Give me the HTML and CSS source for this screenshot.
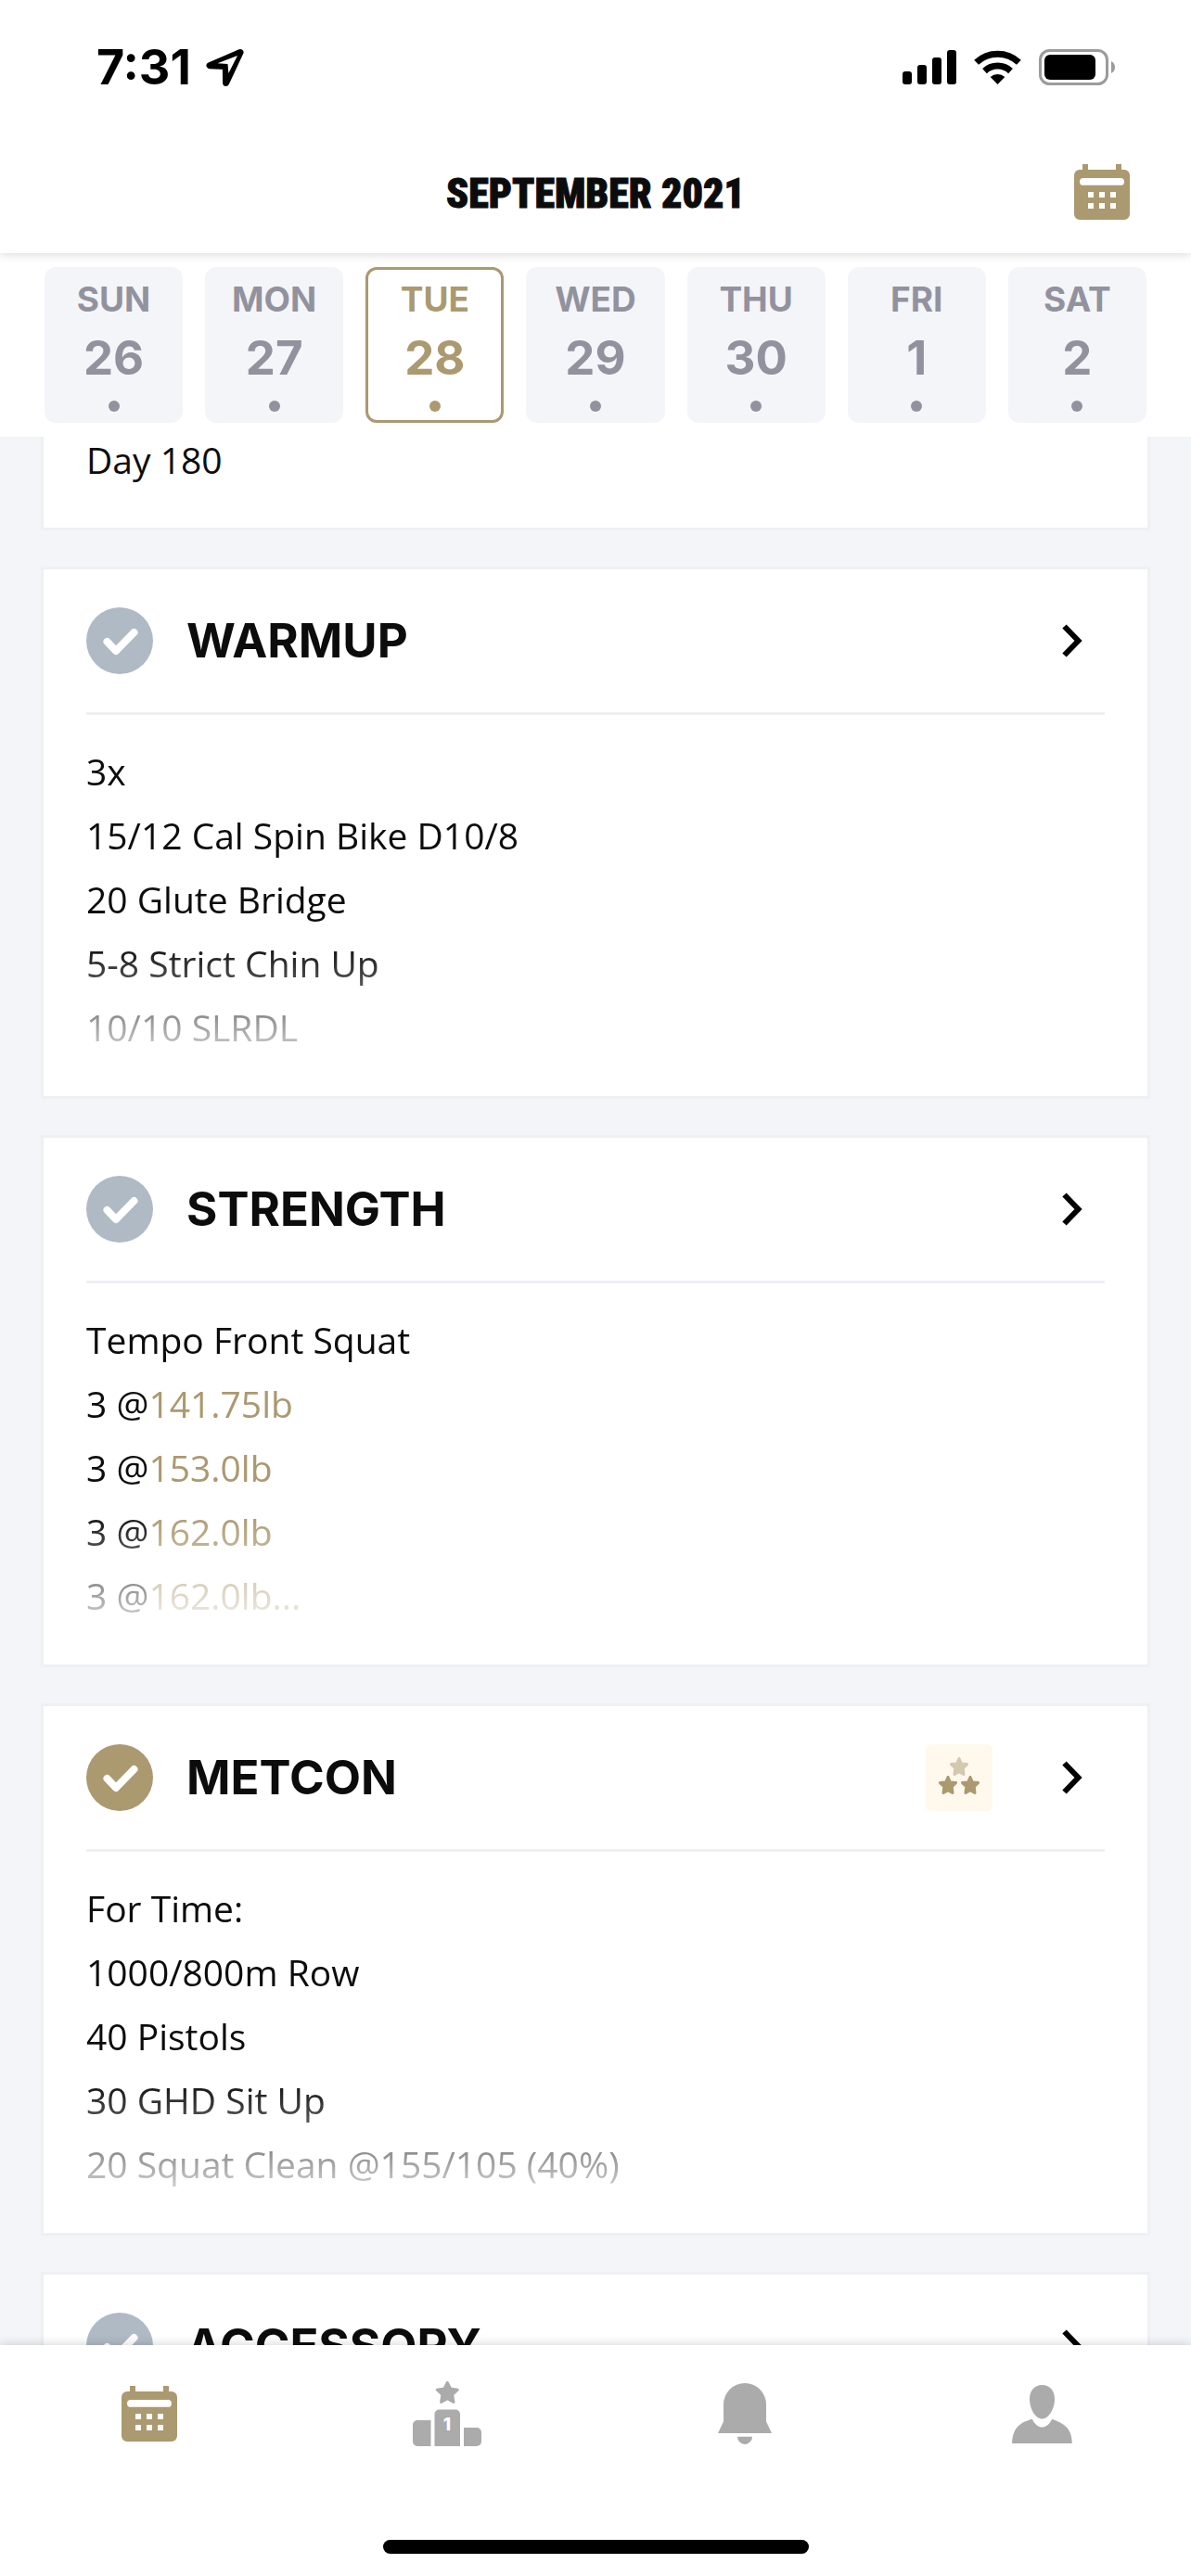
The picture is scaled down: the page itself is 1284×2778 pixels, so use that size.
FILE: index.html
```
<!DOCTYPE html>
<html lang="en">
<head>
<meta charset="utf-8">
<meta name="viewport" content="width=device-width, initial-scale=1">
<title>September 2021</title>
<link rel="stylesheet" href="styles.css">
</head>
<body>
<svg class="sprite" aria-hidden="true">
  <symbol id="calendar" viewBox="0 0 20 20">
    <path fill="currentColor" fill-rule="evenodd" d="M3 0h2v2h10V0h2v2h1a2 2 0 0 1 2 2v14a2 2 0 0 1-2 2H2a2 2 0 0 1-2-2V4a2 2 0 0 1 2-2h1zM3.300 5a1.300 1.300 0 0 0 0 2.600h13.400a1.300 1.300 0 0 0 0-2.600zM5 10v2h2v-2zM9 10v2h2v-2zM13 10v2h2v-2zM5 14v2h2v-2zM9 14v2h2v-2zM13 14v2h2v-2z"/>
  </symbol>
  <symbol id="check" viewBox="0 0 72 72">
    <circle cx="36" cy="36" r="36" fill="currentColor"/>
    <path d="M22.500 37 L32 47 L51.500 27" fill="none" stroke="#fff" stroke-width="8" stroke-linecap="round" stroke-linejoin="round"/>
  </symbol>
  <symbol id="chevron" viewBox="0 0 22 36">
    <path d="M2.500 2.500 L17.500 18 L2.500 33.500" fill="none" stroke="#000" stroke-width="6"/>
  </symbol>
  <symbol id="star" viewBox="0 0 20 20">
    <path fill="currentColor" stroke="currentColor" stroke-width="3" stroke-linejoin="round" d="M10 1.500 L12.300 6.900 L18.500 7.600 L14.200 11.800 L15 18.500 L10 15.700 L5 18.500 L5.800 11.800 L1.500 7.600 L7.700 6.900 Z"/>
  </symbol>
</svg>

<header class="top">
  <div class="status">
    <div class="status-left">
      <time>7:31</time>
      <svg class="location" viewBox="0 0 42 42" aria-hidden="true"><path d="M37 4.500 L4 18.700 L21.300 19.500 L21.600 37.500 Z" stroke="#000" stroke-width="7" stroke-linejoin="round"/><path d="M34 8 L12.500 16.300 L23.500 17 L24.400 27 Z" fill="#fff"/></svg>
    </div>
    <div class="status-right">
      <svg class="signal" viewBox="0 0 58 37" aria-hidden="true"><rect y="23" width="10" height="14" rx="3"/><rect x="16" y="16" width="10" height="21" rx="3"/><rect x="32" y="8" width="10" height="29" rx="3"/><rect x="48" width="10" height="37" rx="3"/></svg>
      <svg class="wifi" viewBox="0 0 51 37" aria-hidden="true"><path d="M25.500 37 L17.700 29 A11.500 11.500 0 0 1 33.300 29 Z"/><path d="M11.500 22.600 A20.500 20.500 0 0 1 39.500 22.600" fill="none" stroke="#000" stroke-width="7"/><path d="M2.600 13.200 A33.500 33.500 0 0 1 48.400 13.200" fill="none" stroke="#000" stroke-width="7"/></svg>
      <svg class="battery" viewBox="0 0 82 39" aria-hidden="true"><rect x="1.500" y="1.500" width="72" height="36" rx="10" fill="none" stroke="#9b9b9b" stroke-width="3"/><rect x="6" y="6" width="55" height="27" rx="6"/><path d="M78 13 Q82 15 82 19.500 Q82 24 78 26 Z" fill="#9b9b9b"/></svg>
    </div>
  </div>
  <div class="title-bar">
    <h1>SEPTEMBER 2021</h1>
    <button class="calendar-button" type="button" aria-label="Open calendar"><svg class="icon-calendar"><use href="#calendar"/></svg></button>
  </div>
</header>

<nav class="days" aria-label="Days">
  <button class="day" type="button"><span>SUN</span><strong>26</strong><i></i></button>
  <button class="day" type="button"><span>MON</span><strong>27</strong><i></i></button>
  <button class="day day-selected" type="button" aria-current="date"><span>TUE</span><strong>28</strong><i></i></button>
  <button class="day" type="button"><span>WED</span><strong>29</strong><i></i></button>
  <button class="day" type="button"><span>THU</span><strong>30</strong><i></i></button>
  <button class="day" type="button"><span>FRI</span><strong>1</strong><i></i></button>
  <button class="day" type="button"><span>SAT</span><strong>2</strong><i></i></button>
</nav>

<main class="feed">
  <section class="card card-intro"><p>Day 180</p></section>

  <section class="card">
    <a class="card-head" href="#warmup">
      <svg class="check"><use href="#check"/></svg>
      <h2>WARMUP</h2>
      <svg class="chevron"><use href="#chevron"/></svg>
    </a>
    <div class="lines">
      <p>3x</p>
      <p>15/12 Cal Spin Bike D10/8</p>
      <p>20 Glute Bridge</p>
      <p>5-8 Strict Chin Up</p>
      <p>10/10 SLRDL</p>
    </div>
  </section>

  <section class="card">
    <a class="card-head" href="#strength">
      <svg class="check"><use href="#check"/></svg>
      <h2>STRENGTH</h2>
      <svg class="chevron"><use href="#chevron"/></svg>
    </a>
    <div class="lines">
      <p>Tempo Front Squat</p>
      <p>3 @<span class="load">141.75lb</span></p>
      <p>3 @<span class="load">153.0lb</span></p>
      <p>3 @<span class="load">162.0lb</span></p>
      <p>3 @<span class="load">162.0lb...</span></p>
    </div>
  </section>

  <section class="card">
    <a class="card-head" href="#metcon">
      <svg class="check check-done"><use href="#check"/></svg>
      <h2>METCON</h2>
      <span class="level" role="img" aria-label="Level 2 of 3">
        <svg class="star star-dim"><use href="#star"/></svg>
        <span class="star-row"><svg class="star"><use href="#star"/></svg><svg class="star"><use href="#star"/></svg></span>
      </span>
      <svg class="chevron"><use href="#chevron"/></svg>
    </a>
    <div class="lines">
      <p>For Time:</p>
      <p>1000/800m Row</p>
      <p>40 Pistols</p>
      <p>30 GHD Sit Up</p>
      <p>20 Squat Clean @155/105 (40%)</p>
    </div>
  </section>

  <section class="card">
    <a class="card-head" href="#accessory">
      <svg class="check"><use href="#check"/></svg>
      <h2>ACCESSORY</h2>
      <svg class="chevron"><use href="#chevron"/></svg>
    </a>
  </section>
</main>

<footer class="bottom">
  <nav class="tabs" aria-label="Main">
    <a class="tab tab-active" href="#calendar-tab" aria-label="Calendar"><svg class="icon-calendar"><use href="#calendar"/></svg></a>
    <a class="tab" href="#leaderboard" aria-label="Leaderboard">
      <svg class="icon-podium" viewBox="0 0 74 70">
        <path fill="currentColor" d="M19.500 42v28H5a5 5 0 0 1-5-5V47a5 5 0 0 1 5-5zM23.500 70V35.500a5 5 0 0 1 5-5H46a5 5 0 0 1 5 5V70zM55 50h14a5 5 0 0 1 5 5v10a5 5 0 0 1-5 5H55z"/>
        <path fill="currentColor" stroke="currentColor" stroke-width="3" stroke-linejoin="round" d="M37.300 1.500 L40.500 8 L48.300 9.200 L42.700 14.400 L44 22.400 L37.300 18.800 L30.600 22.400 L31.900 14.400 L26.300 9.200 L34.100 8 Z"/>
        <text x="37" y="53" text-anchor="middle">1</text>
      </svg>
    </a>
    <a class="tab" href="#notifications" aria-label="Notifications"><svg class="icon-bell" viewBox="0 0 58 66"><path fill="currentColor" d="M0 54 L6 41.500 V23 A23 23 0 0 1 52 23 V41.500 L58 54 ZM21 57.700 H37 A8 8.300 0 0 1 21 57.700 Z"/></svg></a>
    <a class="tab" href="#profile" aria-label="Profile"><svg class="icon-person" viewBox="0 0 65 63"><path fill="currentColor" d="M32.500 0 C41 0 46 6.500 46 15 C46 26 39.500 36.500 32.500 36.500 C25.500 36.500 19 26 19 15 C19 6.500 24 0 32.500 0 Z M21.800 36.800 C27 48.500 38 48.500 43.200 36.800 C57 42 64.500 47 64.800 63 H0 C1 47 7 41 21.800 36.800 Z"/></svg></a>
  </nav>
  <div class="home-bar"></div>
</footer>
</body>
</html>
```
FILE: styles.css
```
:root {
  --gold: #ab9970;
  --ink: #0c0c0d;
  --muted: #92929f;
  --surface: #f4f5f8;
  --line: #eff0f4;
  --heading: Inter, "Liberation Sans", sans-serif;
  --body: "Open Sans", "Noto Sans", sans-serif;
}

* {
  box-sizing: border-box;
  margin: 0;
}

html,
body {
  height: 100%;
}

body {
  display: flex;
  flex-direction: column;
  background: var(--surface);
  color: var(--ink);
  font: 400 39px/69px var(--body);
}

button {
  padding: 0;
  border: 0;
  background: none;
  font: inherit;
  color: inherit;
}

a {
  color: inherit;
  text-decoration: none;
}

svg {
  display: block;
  flex: none;
}

.sprite {
  position: absolute;
  width: 0;
  height: 0;
}

/* Status bar and title */
.top {
  position: relative;
  z-index: 1;
  flex: none;
  background: #fff;
  box-shadow: 0 1px 10px rgba(0, 0, 0, 0.16);
}

.status {
  display: flex;
  justify-content: space-between;
  align-items: center;
  height: 145px;
  padding: 0 82px 0 104px;
}

.status-left,
.status-right {
  display: flex;
  align-items: center;
}

.status-left {
  gap: 16px;
  font: 700 52px/60px var(--heading);
  color: #000;
}

.status-right {
  gap: 19px;
}

.location {
  width: 42px;
  height: 42px;
}

.signal {
  width: 58px;
  height: 37px;
}

.wifi {
  width: 51px;
  height: 37px;
}

.battery {
  width: 82px;
  height: 39px;
}

.title-bar {
  display: grid;
  grid-template-columns: 1fr auto 1fr;
  align-items: center;
  height: 128px;
  padding: 0 66px 4px;
}

.title-bar h1 {
  grid-column: 2;
  margin-top: 4px;
  font: 900 44px/60px "Roboto Condensed", "Open Sans Condensed", "Open Sans", sans-serif;
  -webkit-text-stroke: 1px currentColor;
}

.calendar-button {
  justify-self: end;
  color: var(--gold);
}

.icon-calendar {
  width: 60px;
  height: 60px;
}

/* Week strip */
.days {
  display: grid;
  grid-template-columns: repeat(7, 1fr);
  gap: 24px;
  flex: none;
  padding: 15px 48px;
  background: #fff;
}

.day {
  display: flex;
  flex-direction: column;
  align-items: center;
  height: 168px;
  padding-top: 11px;
  border-radius: 12px;
  background: var(--surface);
  color: var(--muted);
  font: 700 37px/48px var(--heading);
}

.day strong {
  margin-top: 7px;
  font-size: 51px;
  font-weight: 700;
  line-height: 64px;
}

.day i {
  width: 12px;
  height: 12px;
  margin-top: 14px;
  border-radius: 50%;
  background: currentColor;
}

.day-selected {
  padding-top: 8px;
  border: 3px solid var(--gold);
  background: #fff;
  color: var(--gold);
}

/* Workout cards */
.feed {
  display: flex;
  flex-direction: column;
  flex: 1;
  gap: 39px;
  min-height: 0;
  padding: 0 44px;
  overflow-y: auto;
  scrollbar-width: none;
}

.card {
  flex: none;
  padding: 0 46px;
  border: 3px solid var(--line);
  background: #fff;
}

.card-intro {
  padding-bottom: 48px;
  border-top: 0;
}

.card-intro p {
  line-height: 50px;
}

.card-head {
  display: flex;
  align-items: center;
  height: 157px;
  padding-right: 24px;
  border-bottom: 3px solid var(--line);
}

.card-head h2 {
  flex: 1;
  margin-left: 36px;
  font: 700 51px/60px var(--heading);
}

.check {
  width: 72px;
  height: 72px;
  color: #b0bac5;
}

.check-done {
  color: var(--gold);
}

.chevron {
  width: 22px;
  height: 36px;
}

.level {
  display: flex;
  flex-direction: column;
  align-items: center;
  width: 72px;
  height: 72px;
  margin-right: 75px;
  padding-top: 14px;
  border-radius: 6px;
  background: #fff8ec;
  color: var(--gold);
}

.star {
  width: 20px;
  height: 20px;
}

.star-dim {
  opacity: 0.5;
}

.star-row {
  display: flex;
  gap: 4px;
}

.lines {
  margin: 26px 0 20px;
  padding-bottom: 20px;
  -webkit-mask-image: linear-gradient(to top, transparent, #000 144px);
  mask-image: linear-gradient(to top, transparent, #000 144px);
}

.load {
  color: var(--gold);
}

/* Tab bar */
.bottom {
  position: relative;
  display: flex;
  flex-direction: column;
  justify-content: space-between;
  align-items: center;
  flex: none;
  height: 249px;
  padding-bottom: 24px;
  background: #fff;
  box-shadow: 0 -1px 10px rgba(0, 0, 0, 0.16);
}

.tabs {
  display: grid;
  grid-template-columns: repeat(4, 1fr);
  width: 100%;
}

.tab {
  display: flex;
  justify-content: center;
  align-items: center;
  height: 148px;
  color: #ababab;
}

.tab-active {
  color: var(--gold);
}

.icon-podium {
  width: 74px;
  height: 70px;
}

.icon-podium text {
  fill: #fff;
  font: 800 19px var(--heading);
}

.icon-bell {
  width: 58px;
  height: 66px;
}

.icon-person {
  width: 65px;
  height: 63px;
}

.home-bar {
  width: 459px;
  max-width: 60%;
  height: 15px;
  border-radius: 8px;
  background: #000;
}
```
